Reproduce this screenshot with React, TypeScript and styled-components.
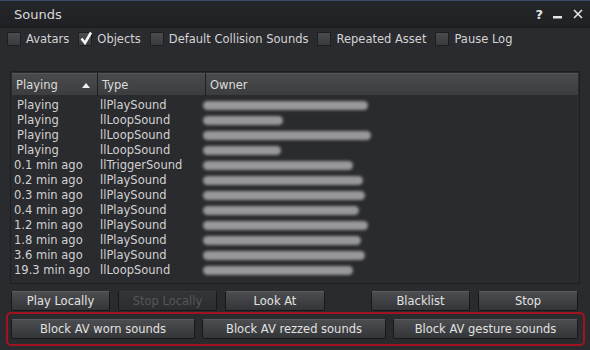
import React from "react";
import styled, { createGlobalStyle } from "styled-components";

const Global = createGlobalStyle`
  html, body {
    margin: 0;
    padding: 0;
    background: #1c1d20;
  }
  * { box-sizing: border-box; }
`;

const Floater = styled.div`
  width: 590px;
  height: 350px;
  background: #2a2b2f;
  border-top: 1px solid #3a4a6a;
  font-family: "DejaVu Sans", "Liberation Sans", sans-serif;
  color: #d4d4d4;
  display: flex;
  flex-direction: column;
  overflow: hidden;
`;

const TitleBar = styled.div`
  height: 27px;
  display: flex;
  align-items: center;
  padding: 0 7px 0 14px;
  background: linear-gradient(#25262a, #202125);
  border-bottom: 1px solid #1a1b1e;
`;

const Title = styled.div`
  flex: 1;
  font-size: 13px;
  color: #d8d8d8;
`;

const TitleIcons = styled.div`
  display: flex;
  align-items: center;
  gap: 10px;
  color: #e6e6e6;
`;

const FilterRow = styled.div`
  display: flex;
  align-items: center;
  height: 20px;
  margin-top: 1px;
  padding-left: 7px;
  gap: 9px;
  font-size: 11.5px;
`;

const Check = styled.label`
  display: flex;
  align-items: center;
  gap: 5px;
`;

const Box = styled.span`
  width: 14px;
  height: 14px;
  position: relative;
  background: linear-gradient(#4b4c4f, #3a3b3e);
  border: 1px solid #1d1e21;
  border-radius: 1px;
`;

const Tick = styled.svg`
  position: absolute;
  left: 0px;
  top: -3px;
`;

const ListPanel = styled.div`
  margin: 22px 10px 0 10px;
  height: 213px;
  background: #2a2b2f;
  border: 1px solid #1e1f22;
  padding: 1px;
`;

const Header = styled.div`
  display: grid;
  grid-template-columns: 85px 107px 1fr;
  height: 23px;
  gap: 1px;
  background: #1e1f22;
`;

const HeadCell = styled.div`
  position: relative;
  display: flex;
  align-items: center;
  padding-left: 4px;
  font-size: 11.5px;
  color: #dcdcdc;
  background: linear-gradient(#4a4b4d, #3c3d3f);
  border-top: 1px solid #555658;
  border-bottom: 1px solid #2a2b2d;
`;

const SortArrow = styled.span`
  position: absolute;
  right: 7px;
  top: 9px;
  width: 0;
  height: 0;
  border-left: 4px solid transparent;
  border-right: 4px solid transparent;
  border-bottom: 5px solid #f0f0f0;
`;

const Rows = styled.div`
  padding-top: 2px;
`;

const Row = styled.div`
  display: grid;
  grid-template-columns: 86px 106px 1fr;
  height: 15px;
  align-items: center;
  font-size: 11.5px;
  color: #d2d2d2;
`;

const Cell = styled.div<{ $indent?: number }>`
  padding-left: ${(p) => p.$indent ?? 2}px;
  white-space: nowrap;
  line-height: 15px;
`;

const Smudge = styled.div`
  height: 9px;
  margin-left: -1px;
  border-radius: 5px;
  background: rgba(210, 210, 210, 0.66);
  filter: blur(1.6px);
`;

const ButtonRow = styled.div`
  display: flex;
  padding: 0 11px;
  margin-top: 7px;
  height: 20px;
`;

const Button = styled.button<{ $w: number; $gap?: number }>`
  width: ${(p) => p.$w}px;
  margin-right: ${(p) => p.$gap ?? 0}px;
  height: 20px;
  padding: 0;
  font-family: "DejaVu Sans", "Liberation Sans", sans-serif;
  font-size: 11.5px;
  color: ${(p) => (p.disabled ? "#56575a" : "#e2e2e2")};
  background: ${(p) =>
    p.disabled
      ? "linear-gradient(#333437, #2c2d30)"
      : "linear-gradient(#4c4d50, #343538)"};
  border: 1px solid #17181a;
  border-top-color: ${(p) => (p.disabled ? "#3a3b3e" : "#5a5b5e")};
  border-radius: 2px;
`;

const Outline = styled.div`
  margin: 1px 5px 0 6px;
  height: 34px;
  border: 2px solid #a3131f;
  border-radius: 5px;
  display: flex;
  align-items: center;
  padding-left: 3px;
`;

const rows: [string, string, number][] = [
  ["Playing", "llPlaySound", 165],
  ["Playing", "llLoopSound", 80],
  ["Playing", "llLoopSound", 168],
  ["Playing", "llLoopSound", 78],
  ["0.1 min ago", "llTriggerSound", 150],
  ["0.2 min ago", "llPlaySound", 160],
  ["0.3 min ago", "llPlaySound", 162],
  ["0.4 min ago", "llPlaySound", 156],
  ["1.2 min ago", "llPlaySound", 165],
  ["1.8 min ago", "llPlaySound", 158],
  ["3.6 min ago", "llPlaySound", 162],
  ["19.3 min ago", "llLoopSound", 150],
];

const filters = [
  ["Avatars", false],
  ["Objects", true],
  ["Default Collision Sounds", false],
  ["Repeated Asset", false],
  ["Pause Log", false],
] as const;

export default function App() {
  return (
    <>
      <Global />
      <Floater>
        <TitleBar>
          <Title>Sounds</Title>
          <TitleIcons>
            <span style={{ fontSize: 13, fontWeight: "bold" }}>?</span>
            <svg width="10" height="12" viewBox="0 0 10 12">
              <rect x="0" y="8" width="9" height="2.5" fill="#e6e6e6" />
            </svg>
            <svg width="10" height="10" viewBox="0 0 10 10">
              <path d="M1 1 L9 9 M9 1 L1 9" stroke="#e6e6e6" strokeWidth="1.6" />
            </svg>
          </TitleIcons>
        </TitleBar>

        <FilterRow>
          {filters.map(([label, on]) => (
            <Check key={label}>
              <Box>
                {on && (
                  <Tick width="15" height="16" viewBox="0 0 15 16">
                    <path
                      d="M2.5 8.5 L6 13 L12 2.5"
                      stroke="#f4f4f4"
                      strokeWidth="2.6"
                      fill="none"
                    />
                  </Tick>
                )}
              </Box>
              {label}
            </Check>
          ))}
        </FilterRow>

        <ListPanel>
          <Header>
            <HeadCell>
              Playing
              <SortArrow />
            </HeadCell>
            <HeadCell>Type</HeadCell>
            <HeadCell>Owner</HeadCell>
          </Header>
          <Rows>
            {rows.map(([when, type, w], i) => (
              <Row key={i}>
                <Cell $indent={when === "Playing" ? 5 : 2}>{when}</Cell>
                <Cell>{type}</Cell>
                <Smudge style={{ width: w }} />
              </Row>
            ))}
          </Rows>
        </ListPanel>

        <ButtonRow>
          <Button $w={99} $gap={8}>Play Locally</Button>
          <Button $w={99} $gap={8} disabled>Stop Locally</Button>
          <Button $w={100} $gap={46}>Look At</Button>
          <Button $w={99} $gap={8}>Blacklist</Button>
          <Button $w={100}>Stop</Button>
        </ButtonRow>

        <Outline>
          <Button $w={184} $gap={7}>Block AV worn sounds</Button>
          <Button $w={184} $gap={7}>Block AV rezzed sounds</Button>
          <Button $w={185}>Block AV gesture sounds</Button>
        </Outline>
      </Floater>
    </>
  );
}
